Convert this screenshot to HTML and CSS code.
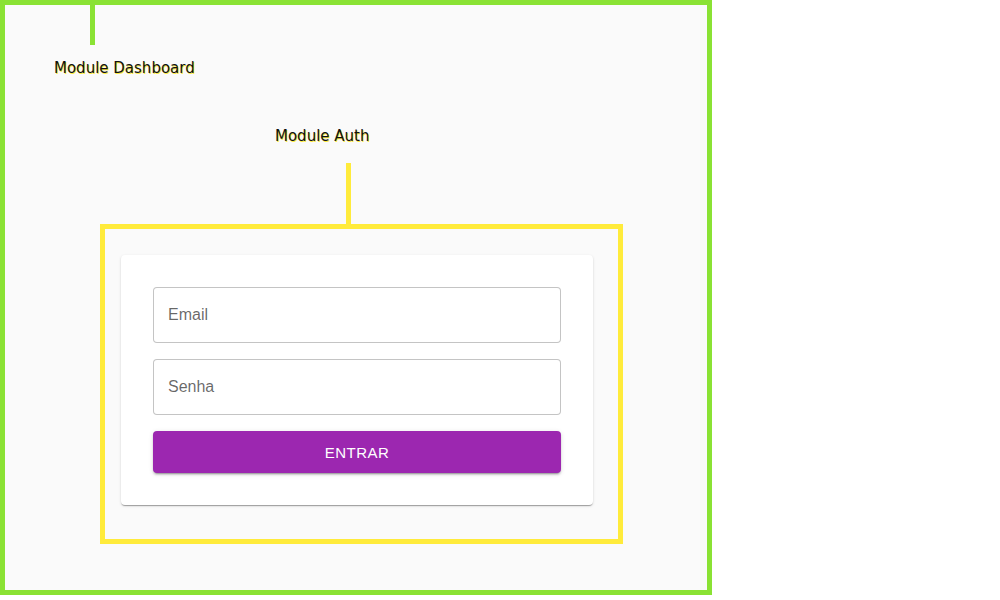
FILE: index.html
```html
<!DOCTYPE html>
<html lang="pt">
<head>
<meta charset="utf-8">
<title>Login</title>
<link rel="stylesheet" href="styles.css">
</head>
<body>
<div class="module-dashboard">
  <div class="tick tick-dashboard"></div>
  <div class="module-label label-dashboard">Module Dashboard</div>
  <div class="module-label label-auth">Module Auth</div>
  <div class="tick tick-auth"></div>
  <div class="module-auth">
    <form class="card">
      <input class="field" type="text" placeholder="Email">
      <input class="field" type="password" placeholder="Senha">
      <button class="btn" type="button">Entrar</button>
    </form>
  </div>
</div>
</body>
</html>
```

FILE: styles.css
```css
* { box-sizing: border-box; }

html, body {
  margin: 0;
  padding: 0;
  background: #ffffff;
}

.module-dashboard {
  width: 712px;
  height: 595px;
  border: 5px solid #8ae234;
  background: #fafafa;
  display: flex;
  flex-direction: column;
  align-items: flex-start;
}

.tick {
  width: 5px;
}

.tick-dashboard {
  height: 40px;
  margin-left: 85px;
  background: #8ae234;
}

.module-label {
  font-family: "DejaVu Sans", sans-serif;
  font-size: 15px;
  line-height: 18px;
  color: #111;
  text-shadow: 1px 1px 0 #ffeb3b;
}

.label-dashboard {
  margin-top: 14px;
  margin-left: 49px;
}

.label-auth {
  margin-top: 50px;
  margin-left: 270px;
}

.tick-auth {
  height: 61px;
  margin-top: 18px;
  margin-left: 341px;
  background: #ffeb3b;
}

.module-auth {
  margin-left: 95px;
  width: 523px;
  border: 5px solid #ffeb3b;
  padding: 26px 25px 34px 16px;
}

.card {
  width: 472px;
  margin: 0;
  padding: 32px;
  background: #ffffff;
  border-radius: 4px;
  box-shadow: 0px 2px 1px -1px rgba(0,0,0,0.2), 0px 1px 1px 0px rgba(0,0,0,0.14), 0px 1px 3px 0px rgba(0,0,0,0.12);
  display: flex;
  flex-direction: column;
  gap: 16px;
}

.field {
  display: block;
  width: 100%;
  height: 56px;
  margin: 0;
  padding: 0 14px;
  border: 1px solid rgba(0,0,0,0.23);
  border-radius: 4px;
  background: #fff;
  font-family: "Liberation Sans", Arial, sans-serif;
  font-size: 16px;
  color: rgba(0,0,0,0.87);
  outline: none;
}

.field::placeholder {
  color: rgba(0,0,0,0.6);
  opacity: 1;
}

.btn {
  display: block;
  width: 100%;
  height: 42px;
  margin: 0;
  border: none;
  border-radius: 4px;
  background: #9c27b0;
  color: #fff;
  font-family: "Liberation Sans", Arial, sans-serif;
  font-size: 15px;
  font-weight: 400;
  letter-spacing: 0.46px;
  text-transform: uppercase;
  box-shadow: 0px 3px 1px -2px rgba(0,0,0,0.2), 0px 2px 2px 0px rgba(0,0,0,0.14), 0px 1px 5px 0px rgba(0,0,0,0.12);
  cursor: pointer;
}
```
